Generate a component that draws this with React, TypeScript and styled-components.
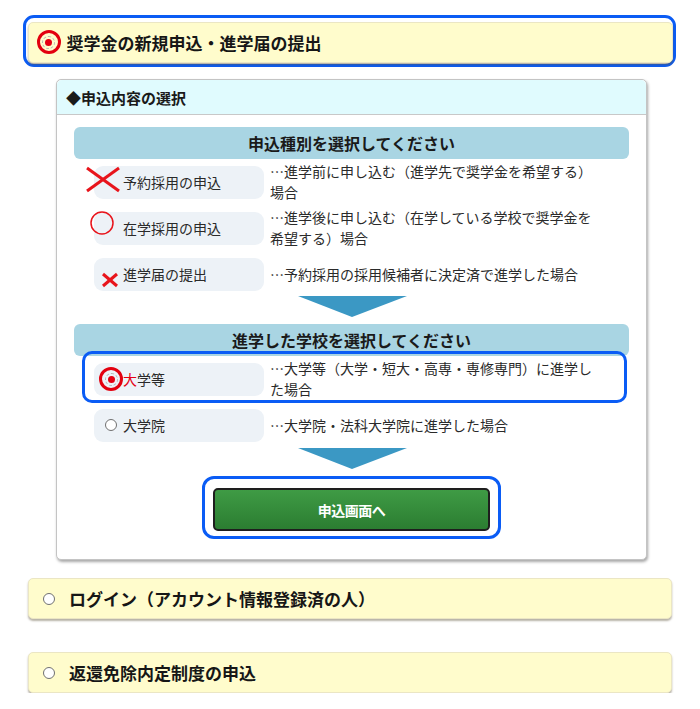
import React from "react";
import styled, { createGlobalStyle } from "styled-components";

const GlobalStyle = createGlobalStyle`
  body {
    margin: 0;
    background: #ffffff;
    font-family: "Noto Sans CJK JP", "Noto Sans", sans-serif;
    color: #1e1e1e;
  }
`;

const Page = styled.div`
  width: 700px;
  padding-top: 15px;
  display: flex;
  flex-direction: column;
`;

const Highlight = styled.div`
  margin: 0 24px 0 23px;
  border: 3.5px solid #0b5cf4;
  border-radius: 11px;
  padding: 3.5px 0.5px 1.5px 1.5px;
`;

const Bar = styled.div<{ $gap?: number }>`
  display: flex;
  align-items: center;
  gap: ${(p) => p.$gap ?? 6}px;
  height: 39px;
  padding-left: 8px;
  background: #fffccc;
  border: 1px solid #ebe6c4;
  border-radius: 5px;
  box-shadow: 0 2px 2px rgba(95, 85, 60, 0.45);
  font-size: 17px;
  font-weight: bold;
  color: #161616;
`;

const PlainBar = styled(Bar)<{ $top: number }>`
  margin: ${(p) => p.$top}px 28px 0 28px;
`;

const MarkSlot = styled.span<{ $w: number }>`
  position: relative;
  display: flex;
  align-items: center;
  justify-content: center;
  width: ${(p) => p.$w}px;
  flex: none;
`;

const Radio = styled.span`
  width: 12px;
  height: 12px;
  border: 1px solid #707070;
  border-radius: 50%;
  background: #fff;
  box-sizing: border-box;
`;

const CheckedRadio = styled.span`
  display: flex;
  align-items: center;
  justify-content: center;
  width: 13px;
  height: 13px;
  border: 1px dashed #b4b4b4;
  border-radius: 50%;
  box-sizing: border-box;

  &::after {
    content: "";
    width: 7px;
    height: 7px;
    border-radius: 50%;
    background: #e60012;
  }
`;

const RedRing = styled.span`
  position: absolute;
  left: 50%;
  top: 50%;
  width: 24px;
  height: 24px;
  transform: translate(-50%, -50%);
  border: 3px solid #e3000f;
  border-radius: 50%;
  box-sizing: border-box;
`;

const Card = styled.div`
  margin: 12px 0 0 56px;
  width: 591px;
  background: #fff;
  border: 1px solid #c4c4c4;
  border-radius: 5px;
  box-shadow: 1px 2px 3px rgba(0, 0, 0, 0.35);
  box-sizing: border-box;
`;

const CardHeader = styled.div`
  display: flex;
  align-items: center;
  height: 34px;
  padding-left: 9px;
  background: #e0fbfe;
  border-bottom: 1px solid #c8c8c8;
  border-radius: 5px 5px 0 0;
  font-size: 15px;
  font-weight: bold;
  color: #1a1a1a;
`;

const CardBody = styled.div`
  display: flex;
  flex-direction: column;
  padding: 12px 17px 20px 17px;
`;

const SectionTitle = styled.div<{ $top?: number }>`
  display: flex;
  align-items: center;
  justify-content: center;
  height: 32px;
  margin-top: ${(p) => p.$top ?? 0}px;
  background: #a9d5e3;
  border-radius: 6px;
  font-size: 16px;
  font-weight: bold;
  color: #1a1a1a;
`;

const Row = styled.div<{ $outlined?: boolean }>`
  position: relative;
  display: flex;
  align-items: center;
  height: 46px;
  padding-left: 20px;

  ${(p) =>
    p.$outlined
      ? `
    &::after {
      content: "";
      position: absolute;
      left: 8px;
      right: 2px;
      top: -5px;
      bottom: -1px;
      border: 3px solid #0a5cf5;
      border-radius: 10px;
      pointer-events: none;
    }
  `
      : ""}
`;

const Pill = styled.div`
  position: relative;
  display: flex;
  align-items: center;
  gap: 5px;
  width: 170px;
  height: 33px;
  padding-left: 10px;
  box-sizing: border-box;
  background: #edf2f7;
  border-radius: 9px;
  font-size: 14px;
  color: #2a2a2a;
`;

const Label = styled.span`
  white-space: nowrap;
`;

const RedChar = styled.span`
  color: #e60012;
`;

const Desc = styled.div`
  margin-left: 6px;
  font-size: 14px;
  line-height: 21px;
  color: #2a2a2a;
  white-space: nowrap;
`;

const Annotation = styled.svg<{ $left: number; $top: number }>`
  position: absolute;
  left: ${(p) => p.$left}px;
  top: ${(p) => p.$top}px;
  overflow: visible;
`;

const Arrow = styled.div<{ $top?: number }>`
  align-self: center;
  width: 0;
  height: 0;
  margin-top: ${(p) => p.$top ?? 0}px;
  margin-left: 1px;
  border-left: 54px solid transparent;
  border-right: 55px solid transparent;
  border-top: 21px solid #3b98c4;
`;

const ButtonFrame = styled.div`
  align-self: center;
  margin-top: 7px;
  width: 299px;
  height: 63px;
  padding: 9px 8px 5px 8px;
  border: 3px solid #0a5cf5;
  border-radius: 12px;
  box-sizing: border-box;
`;

const GreenButton = styled.button`
  display: flex;
  align-items: center;
  justify-content: center;
  width: 100%;
  height: 43px;
  border: 2px solid #1e1e1e;
  border-radius: 5px;
  background: linear-gradient(#3f9b45, #2b7d31);
  color: #fff;
  font-family: inherit;
  font-size: 14px;
  font-weight: bold;
  letter-spacing: -0.5px;
  cursor: pointer;
`;

const Cross = ({ w, h, left, top }: { w: number; h: number; left: number; top: number }) => (
  <Annotation $left={left} $top={top} width={w} height={h} viewBox={`0 0 ${w} ${h}`}>
    <line x1={1} y1={1} x2={w - 1} y2={h - 1} stroke="#e8141b" strokeWidth={3} />
    <line x1={w - 1} y1={1} x2={1} y2={h - 1} stroke="#e8141b" strokeWidth={3} />
  </Annotation>
);

const App = () => {
  return (
    <>
      <GlobalStyle />
      <Page>
        <Highlight>
          <Bar>
            <MarkSlot $w={24}>
              <CheckedRadio />
              <RedRing />
            </MarkSlot>
            奨学金の新規申込・進学届の提出
          </Bar>
        </Highlight>

        <Card>
          <CardHeader>◆申込内容の選択</CardHeader>
          <CardBody>
            <SectionTitle>申込種別を選択してください</SectionTitle>
            <Row>
              <Pill>
                <MarkSlot $w={14} />
                <Label>予約採用の申込</Label>
                <Cross w={34} h={25} left={-8} top={1} />
              </Pill>
              <Desc>
                …進学前に申し込む（進学先で奨学金を希望する）
                <br />
                場合
              </Desc>
            </Row>
            <Row>
              <Pill>
                <MarkSlot $w={14} />
                <Label>在学採用の申込</Label>
                <Annotation $left={-4} $top={-1} width={24} height={24} viewBox="0 0 24 24">
                  <circle cx={12} cy={12} r={11} fill="none" stroke="#e8141b" strokeWidth={1.5} />
                </Annotation>
              </Pill>
              <Desc>
                …進学後に申し込む（在学している学校で奨学金を
                <br />
                希望する）場合
              </Desc>
            </Row>
            <Row>
              <Pill>
                <MarkSlot $w={14} />
                <Label>進学届の提出</Label>
                <Cross w={16} h={14} left={8} top={15} />
              </Pill>
              <Desc>…予約採用の採用候補者に決定済で進学した場合</Desc>
            </Row>

            <Arrow $top={-1} />

            <SectionTitle $top={7}>進学した学校を選択してください</SectionTitle>
            <Row $outlined>
              <Pill>
                <MarkSlot $w={14}>
                  <CheckedRadio />
                  <RedRing />
                </MarkSlot>
                <Label>
                  <RedChar>大</RedChar>学等
                </Label>
              </Pill>
              <Desc>
                …大学等（大学・短大・高専・専修専門）に進学し
                <br />
                た場合
              </Desc>
            </Row>
            <Row>
              <Pill>
                <MarkSlot $w={14}>
                  <Radio />
                </MarkSlot>
                <Label>大学院</Label>
              </Pill>
              <Desc>…大学院・法科大学院に進学した場合</Desc>
            </Row>

            <Arrow />

            <ButtonFrame>
              <GreenButton type="button">申込画面へ</GreenButton>
            </ButtonFrame>
          </CardBody>
        </Card>

        <PlainBar $top={18} $gap={8}>
          <MarkSlot $w={24}>
            <Radio />
          </MarkSlot>
          ログイン（アカウント情報登録済の人）
        </PlainBar>

        <PlainBar $top={33} $gap={8}>
          <MarkSlot $w={24}>
            <Radio />
          </MarkSlot>
          返還免除内定制度の申込
        </PlainBar>
      </Page>
    </>
  );
};

export default App;
